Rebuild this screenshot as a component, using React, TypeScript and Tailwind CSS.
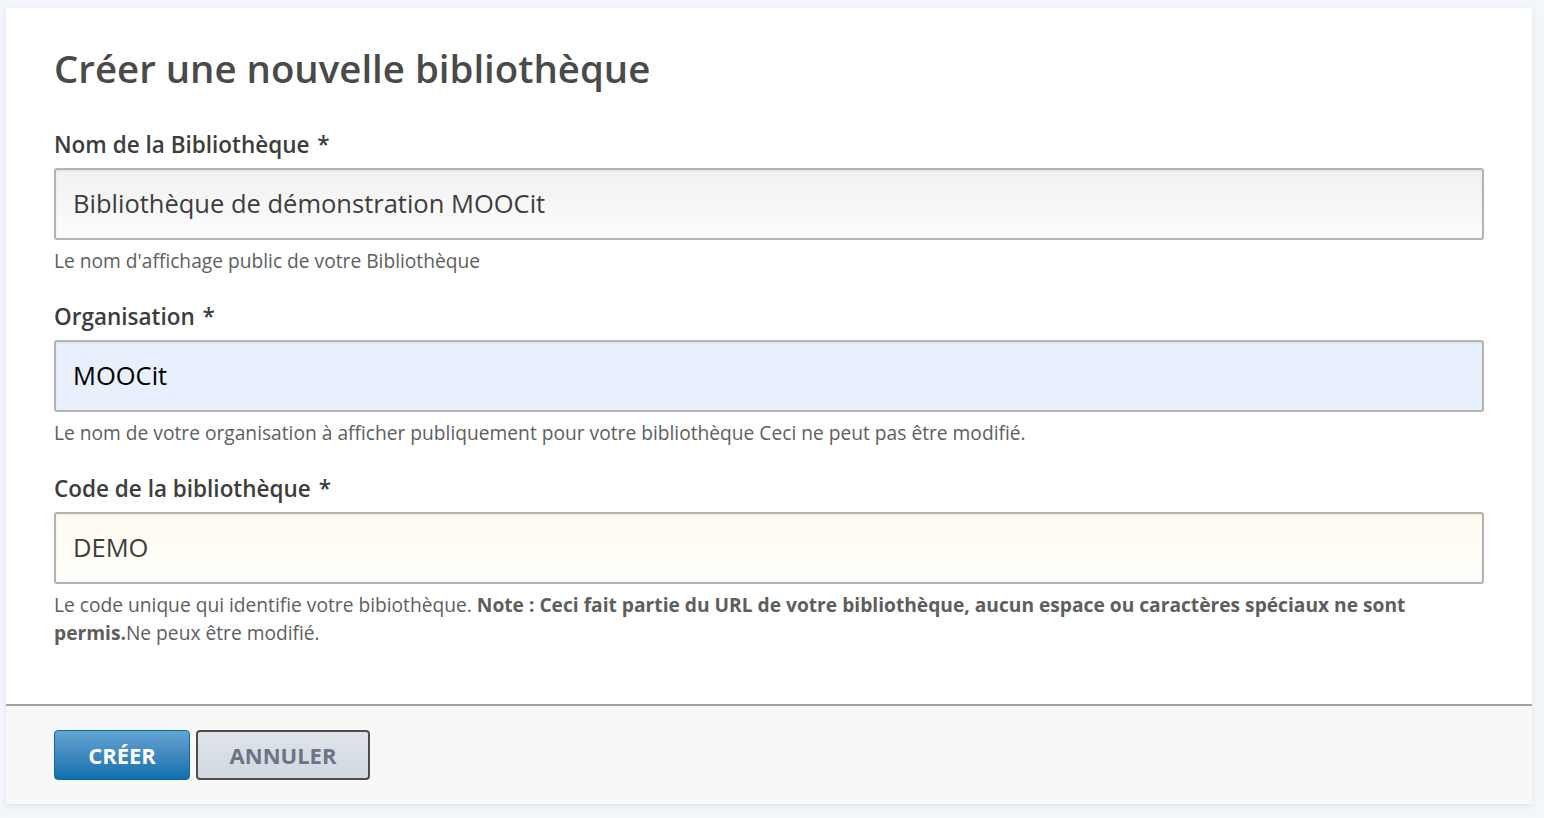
const font = { fontFamily: '"Open Sans", "Noto Sans", sans-serif' };

function Field({
  label,
  value,
  box,
  valueColor,
  children,
}: {
  label: string;
  value: string;
  box: string;
  valueColor: string;
  children: React.ReactNode;
}) {
  return (
    <div className="mb-[27px]">
      <div className="text-[22.5px] font-semibold text-[#3d3d3d] leading-[30px] mb-[8px]">
        {label} <span className="ml-[2px]">*</span>
      </div>
      <div
        className={`h-[72px] border-2 border-[#b3b3b3] rounded-[3px] flex items-center px-[17px] shadow-[inset_0_1px_2px_rgba(0,0,0,0.08)] ${box}`}
      >
        <span className={`text-[25.5px] leading-none ${valueColor}`}>{value}</span>
      </div>
      <div className="text-[19.2px] text-[#5e5e5e] leading-[28px] mt-[7px]">{children}</div>
    </div>
  );
}

export default function App() {
  return (
    <div className="min-h-[818px] bg-[#f3f7fb] pt-[8px] pl-[6px] pr-[12px] pb-[15px]" style={font}>
      <div className="bg-white shadow-[0_2px_6px_rgba(0,0,0,0.08)]">
        <div className="px-[48px] pt-[38px] pb-[30px]">
          <h1 className="text-[38.4px] font-semibold text-[#4a4a4a] leading-[44px] mb-[40px]">
            Créer une nouvelle bibliothèque
          </h1>
          <Field
            label="Nom de la Bibliothèque"
            value="Bibliothèque de démonstration MOOCit"
            box="bg-gradient-to-b from-[#f1f1f1] to-[#fcfcfc]"
            valueColor="text-[#3d3d3d]"
          >
            Le nom d'affichage public de votre Bibliothèque
          </Field>
          <Field
            label="Organisation"
            value="MOOCit"
            box="bg-[#e8f0fe]"
            valueColor="text-black"
          >
            Le nom de votre organisation à afficher publiquement pour votre bibliothèque Ceci ne peut pas être modifié.
          </Field>
          <Field
            label="Code de la bibliothèque"
            value="DEMO"
            box="bg-gradient-to-b from-[#fffbef] to-[#fffefb]"
            valueColor="text-[#3d3d3d]"
          >
            Le code unique qui identifie votre bibiothèque.{' '}
            <strong className="font-bold">
              Note : Ceci fait partie du URL de votre bibliothèque, aucun espace ou caractères spéciaux ne sont permis.
            </strong>
            Ne peux être modifié.
          </Field>
        </div>
        <div className="bg-[#f8f8f8] border-t-2 border-[#a2a2a2] px-[48px] pt-[24px] pb-[24px] flex gap-[6px]">
          <button className="h-[50px] w-[136px] rounded-[4px] border border-[#0b69a6] bg-gradient-to-b from-[#64a4d2] to-[#0b6fae] text-white text-[22px] font-bold uppercase">
            Créer
          </button>
          <button className="h-[50px] w-[174px] rounded-[4px] border-2 border-[#4d4d4d] bg-gradient-to-b from-[#dfe4ea] to-[#d1d8e0] text-[#6a7585] text-[22px] font-bold uppercase">
            Annuler
          </button>
        </div>
      </div>
    </div>
  );
}
